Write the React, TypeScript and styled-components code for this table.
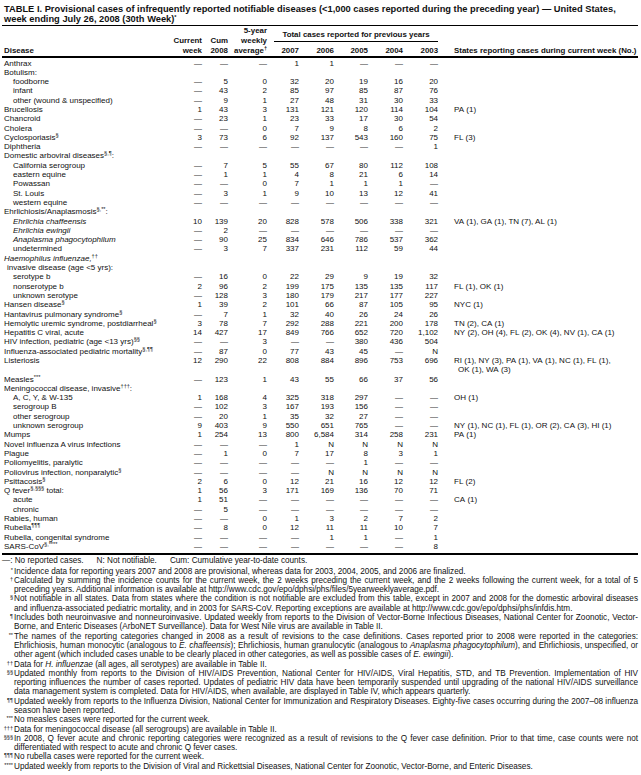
import React, { ReactNode } from "react"
import styled, { createGlobalStyle } from "styled-components"

const GlobalStyle = createGlobalStyle`
  html, body { margin: 0; padding: 0; background: #fff; }
  body { font-family: "Liberation Sans", Arial, Helvetica, sans-serif; color: #111; }
`

const Page = styled.div`
  width: 641px;
  box-sizing: border-box;
  padding: 4px 3px 6px 2px;
`

const Title = styled.h1`
  margin: 0 0 1px 2px;
  font-size: 9.3px;
  line-height: 10px;
  font-weight: bold;
  white-space: nowrap;
`

const Table = styled.table`
  width: 100%;
  border-collapse: collapse;
  table-layout: fixed;
  border-top: 1px solid #000;

  thead { border-bottom: 2px solid #000; }
  tbody { border-bottom: 2px solid #000; }
  tbody tr:first-child td { padding-top: 0.5px; }
  tbody tr:last-child td { padding-bottom: 2px; }
`

const Col = styled.col<{ $w: number }>`
  width: ${p => p.$w}px;
`

const Head = styled.th<{ $align?: string }>`
  padding: 0;
  font-size: 7.9px;
  line-height: 10px;
  font-weight: bold;
  vertical-align: bottom;
  text-align: ${p => p.$align || "right"};
  white-space: nowrap;
`

const DiseaseHead = styled(Head)`
  text-align: left;
  padding-left: 2px;
`

const GroupHead = styled(Head)`
  text-align: center;
`

const GroupLabel = styled.div`
  margin-left: 7px;
  padding-bottom: 1px;
  border-bottom: 1px solid #000;
`

const StatesHead = styled(Head)`
  text-align: left;
  padding-left: 16px;
`

const Cell = styled.td`
  padding: 0;
  font-size: 8px;
  line-height: 9.3px;
  vertical-align: top;
`

const Name = styled(Cell)<{ $indent: number; $italic?: boolean }>`
  padding-left: ${p => p.$indent + 2}px;
  font-style: ${p => (p.$italic ? "italic" : "normal")};
  white-space: nowrap;
`

const Num = styled(Cell)`
  text-align: right;
`

const States = styled(Cell)`
  padding-left: 20px;
  padding-right: 8px;
  text-indent: -4px;
`

const Sup = styled.sup`
  font-size: 5.6px;
  line-height: 0;
  vertical-align: 2.6px;
  font-style: normal;
`

const Notes = styled.div`
  margin-top: 1px;
  font-size: 8.2px;
  line-height: 9.3px;
  letter-spacing: -0.015px;
`

const Legend = styled.div`
  display: flex;
  gap: 13px;
  margin-bottom: 1px;
`

const Note = styled.div`
  display: grid;
  grid-template-columns: 12px 1fr;
`

const Mark = styled.span`
  text-align: right;
  font-size: 5.6px;
  line-height: 7px;
  padding-right: 1px;
`

const NoteText = styled.span`
  text-align: justify;
`

type Row = {
  name: ReactNode
  indent?: number
  italic?: boolean
  vals?: string[]
  states?: string
}

const D = "—"

const rows: Row[] = [
  { name: "Anthrax", vals: [D, D, D, "1", "1", D, D, D] },
  { name: "Botulism:" },
  { name: "foodborne", indent: 9, vals: [D, "5", "0", "32", "20", "19", "16", "20"] },
  { name: "infant", indent: 9, vals: [D, "43", "2", "85", "97", "85", "87", "76"] },
  { name: "other (wound & unspecified)", indent: 9, vals: [D, "9", "1", "27", "48", "31", "30", "33"] },
  { name: "Brucellosis", vals: ["1", "43", "3", "131", "121", "120", "114", "104"], states: "PA (1)" },
  { name: "Chancroid", vals: [D, "23", "1", "23", "33", "17", "30", "54"] },
  { name: "Cholera", vals: [D, D, "0", "7", "9", "8", "6", "2"] },
  { name: <>Cyclosporiasis<Sup>§</Sup></>, vals: ["3", "73", "6", "92", "137", "543", "160", "75"], states: "FL (3)" },
  { name: "Diphtheria", vals: [D, D, D, D, D, D, D, "1"] },
  { name: <>Domestic arboviral diseases<Sup>§,¶</Sup>:</> },
  { name: "California serogroup", indent: 9, vals: [D, "7", "5", "55", "67", "80", "112", "108"] },
  { name: "eastern equine", indent: 9, vals: [D, "1", "1", "4", "8", "21", "6", "14"] },
  { name: "Powassan", indent: 9, vals: [D, D, "0", "7", "1", "1", "1", D] },
  { name: "St. Louis", indent: 9, vals: [D, "3", "1", "9", "10", "13", "12", "41"] },
  { name: "western equine", indent: 9, vals: [D, D, D, D, D, D, D, D] },
  { name: <>Ehrlichiosis/Anaplasmosis<Sup>§,**</Sup>:</> },
  { name: "Ehrlichia chaffeensis", indent: 9, italic: true, vals: ["10", "139", "20", "828", "578", "506", "338", "321"], states: "VA (1), GA (1), TN (7), AL (1)" },
  { name: "Ehrlichia ewingii", indent: 9, italic: true, vals: [D, "2", D, D, D, D, D, D] },
  { name: "Anaplasma  phagocytophilum", indent: 9, italic: true, vals: [D, "90", "25", "834", "646", "786", "537", "362"] },
  { name: "undetermined", indent: 9, vals: [D, "3", "7", "337", "231", "112", "59", "44"] },
  { name: <><i>Haemophilus influenzae,</i><Sup>††</Sup></> },
  { name: "invasive disease (age <5 yrs):", indent: 3 },
  { name: "serotype b", indent: 9, vals: [D, "16", "0", "22", "29", "9", "19", "32"] },
  { name: "nonserotype b", indent: 9, vals: ["2", "96", "2", "199", "175", "135", "135", "117"], states: "FL (1), OK (1)" },
  { name: "unknown serotype", indent: 9, vals: [D, "128", "3", "180", "179", "217", "177", "227"] },
  { name: <>Hansen disease<Sup>§</Sup></>, vals: ["1", "39", "2", "101", "66", "87", "105", "95"], states: "NYC (1)" },
  { name: <>Hantavirus pulmonary syndrome<Sup>§</Sup></>, vals: [D, "7", "1", "32", "40", "26", "24", "26"] },
  { name: <>Hemolytic uremic syndrome, postdiarrheal<Sup>§</Sup></>, vals: ["3", "78", "7", "292", "288", "221", "200", "178"], states: "TN (2), CA (1)" },
  { name: "Hepatitis C viral, acute", vals: ["14", "427", "17", "849", "766", "652", "720", "1,102"], states: "NY (2), OH (4), FL (2), OK (4), NV (1), CA (1)" },
  { name: <>HIV infection, pediatric (age &lt;13 yrs)<Sup>§§</Sup></>, vals: [D, D, "3", D, D, "380", "436", "504"] },
  { name: <>Influenza-associated pediatric mortality<Sup>§,¶¶</Sup></>, vals: [D, "87", "0", "77", "43", "45", D, "N"] },
  { name: "Listeriosis", vals: ["12", "290", "22", "808", "884", "896", "753", "696"], states: "RI (1), NY (3), PA (1), VA (1), NC (1), FL (1), OK (1), WA (3)" },
  { name: <>Measles<Sup>***</Sup></>, vals: [D, "123", "1", "43", "55", "66", "37", "56"] },
  { name: <>Meningococcal disease, invasive<Sup>†††</Sup>:</> },
  { name: "A, C, Y, & W-135", indent: 9, vals: ["1", "168", "4", "325", "318", "297", D, D], states: "OH (1)" },
  { name: "serogroup B", indent: 9, vals: [D, "102", "3", "167", "193", "156", D, D] },
  { name: "other serogroup", indent: 9, vals: [D, "20", "1", "35", "32", "27", D, D] },
  { name: "unknown serogroup", indent: 9, vals: ["9", "403", "9", "550", "651", "765", D, D], states: "NY (1), NC (1), FL (1), OR (2), CA (3), HI (1)" },
  { name: "Mumps", vals: ["1", "254", "13", "800", "6,584", "314", "258", "231"], states: "PA (1)" },
  { name: "Novel influenza A virus infections", vals: [D, D, D, "1", "N", "N", "N", "N"] },
  { name: "Plague", vals: [D, "1", "0", "7", "17", "8", "3", "1"] },
  { name: "Poliomyelitis, paralytic", vals: [D, D, D, D, D, "1", D, D] },
  { name: <>Poliovirus infection, nonparalytic<Sup>§</Sup></>, vals: [D, D, D, D, "N", "N", "N", "N"] },
  { name: <>Psittacosis<Sup>§</Sup></>, vals: ["2", "6", "0", "12", "21", "16", "12", "12"], states: "FL (2)" },
  { name: <>Q fever<Sup>§,§§§</Sup> total:</>, vals: ["1", "56", "3", "171", "169", "136", "70", "71"] },
  { name: "acute", indent: 9, vals: ["1", "51", D, D, D, D, D, D], states: "CA (1)" },
  { name: "chronic", indent: 9, vals: [D, "5", D, D, D, D, D, D] },
  { name: "Rabies, human", vals: [D, D, "0", "1", "3", "2", "7", "2"] },
  { name: <>Rubella<Sup>¶¶¶</Sup></>, vals: [D, "8", "0", "12", "11", "11", "10", "7"] },
  { name: "Rubella, congenital syndrome", vals: [D, D, D, D, "1", "1", D, "1"] },
  { name: <>SARS-CoV<Sup>§,****</Sup></>, vals: [D, D, D, D, D, D, D, "8"] },
]

const notes: { mark: string; text: ReactNode }[] = [
  { mark: "*", text: "Incidence data for reporting years 2007 and 2008 are provisional, whereas data for  2003, 2004, 2005, and 2006 are finalized." },
  { mark: "†", text: "Calculated by summing the incidence counts for the current week, the 2 weeks preceding the current week, and the 2 weeks following the current week, for a total of 5 preceding years. Additional information is available at http://www.cdc.gov/epo/dphsi/phs/files/5yearweeklyaverage.pdf." },
  { mark: "§", text: "Not notifiable in all states. Data from states where the condition is not notifiable are excluded from this table, except in 2007 and 2008 for the domestic arboviral diseases and influenza-associated pediatric mortality, and in 2003 for SARS-CoV. Reporting exceptions are available at http://www.cdc.gov/epo/dphsi/phs/infdis.htm." },
  { mark: "¶", text: "Includes both neuroinvasive and nonneuroinvasive. Updated weekly from reports to the Division of Vector-Borne Infectious Diseases, National Center for Zoonotic, Vector-Borne, and Enteric Diseases (ArboNET Surveillance). Data for West Nile virus are available in Table II." },
  { mark: "**", text: <>The names of the reporting categories changed in 2008 as a result of revisions to the case definitions. Cases reported prior to 2008 were reported in the categories: Ehrlichiosis, human monocytic (analogous to <i>E. chaffeensis</i>); Ehrlichiosis, human granulocytic (analogous to <i>Anaplasma phagocytophilum</i>), and Ehrlichiosis, unspecified, or other agent (which included cases unable to be clearly placed in other categories, as well as possible cases of <i>E. ewingii</i>).</> },
  { mark: "††", text: <>Data for <i>H. influenzae</i> (all ages, all serotypes) are available in Table II.</> },
  { mark: "§§", text: "Updated monthly from reports to the Division of HIV/AIDS Prevention, National Center for HIV/AIDS, Viral Hepatitis, STD, and TB Prevention. Implementation of HIV reporting influences the number of cases reported. Updates of pediatric HIV data have been temporarily suspended until upgrading of the national HIV/AIDS surveillance data management system is completed. Data for HIV/AIDS, when available, are displayed in Table IV, which appears quarterly." },
  { mark: "¶¶", text: "Updated weekly from reports to the Influenza Division, National Center for Immunization and Respiratory Diseases. Eighty-five cases occurring during the 2007–08 influenza season have been reported." },
  { mark: "***", text: "No measles cases were reported for the current week." },
  { mark: "†††", text: "Data for meningococcal disease (all serogroups) are available in Table II." },
  { mark: "§§§", text: "In 2008, Q fever acute and chronic reporting categories were recognized as a result of revisions to the Q fever case definition. Prior to that time, case counts were not differentiated with respect to acute and chronic Q fever cases." },
  { mark: "¶¶¶", text: "No rubella cases were reported for the current week." },
  { mark: "****", text: "Updated weekly from reports to the Division of Viral and Rickettsial Diseases, National Center for Zoonotic, Vector-Borne, and Enteric Diseases." },
]

const widths = [170, 30, 26, 39, 32, 35, 34, 35, 35, 200]

// keep "XX (n)" together so the list breaks only between states
const keepTogether = (s?: string) => s && s.replace(/ \(/g, "\u00a0(")

export default function App() {
  return (
    <Page>
      <GlobalStyle />
      <Title>
        TABLE I. Provisional cases of infrequently reported notifiable diseases (&lt;1,000 cases reported during the preceding year) — United States,
        <br />
        week ending July 26, 2008 (30th Week)<Sup>*</Sup>
      </Title>
      <Table>
        <colgroup>
          {widths.map((w, i) => <Col key={i} $w={w} />)}
        </colgroup>
        <thead>
          <tr>
            <DiseaseHead rowSpan={2}>Disease</DiseaseHead>
            <Head rowSpan={2}>Current<br />week</Head>
            <Head rowSpan={2}>Cum<br />2008</Head>
            <Head rowSpan={2}>5-year<br />weekly<br />average<Sup>†</Sup></Head>
            <GroupHead colSpan={5}>
              <GroupLabel>Total cases reported for previous years</GroupLabel>
            </GroupHead>
            <StatesHead rowSpan={2}>States reporting cases during current week (No.)</StatesHead>
          </tr>
          <tr>
            <Head>2007</Head>
            <Head>2006</Head>
            <Head>2005</Head>
            <Head>2004</Head>
            <Head>2003</Head>
          </tr>
        </thead>
        <tbody>
          {rows.map((r, i) => (
            <tr key={i}>
              <Name $indent={r.indent || 0} $italic={r.italic}>{r.name}</Name>
              {(r.vals || ["", "", "", "", "", "", "", ""]).map((v, j) => <Num key={j}>{v}</Num>)}
              <States>{keepTogether(r.states)}</States>
            </tr>
          ))}
        </tbody>
      </Table>
      <Notes>
        <Legend>
          <span>—: No reported cases.</span>
          <span>N: Not notifiable.</span>
          <span>Cum: Cumulative year-to-date counts.</span>
        </Legend>
        {notes.map((n, i) => (
          <Note key={i}>
            <Mark>{n.mark}</Mark>
            <NoteText>{n.text}</NoteText>
          </Note>
        ))}
      </Notes>
    </Page>
  )
}
